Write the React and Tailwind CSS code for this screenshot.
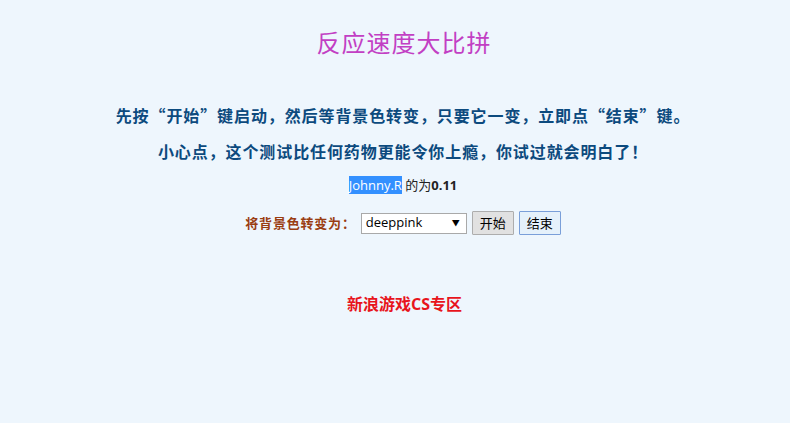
import { useState } from "react";

const cjk = { fontFamily: '"Noto Sans CJK SC", "Noto Sans", sans-serif' };
const ui = { fontFamily: '"Open Sans", "Noto Sans CJK SC", sans-serif' };

export default function App() {
  const [color, setColor] = useState("deeppink");

  return (
    <div className="min-h-[423px] w-full bg-[#eef6fd] flex flex-col items-center pl-[16px]" style={cjk}>
      {/* Title */}
      <h1 className="mt-[26px] text-[24px] leading-[32px] text-[#c23fc4] tracking-[1px] pl-[2px]">
        反应速度大比拼
      </h1>

      {/* Instructions */}
      <div className="mt-[39px] flex flex-col items-center font-bold text-[16px] text-[#0c4a7e] leading-[36px] tracking-[0.9px]">
        <p>先按“开始”键启动，然后等背景色转变，只要它一变，立即点“结束”键。</p>
        <p>小心点，这个测试比任何药物更能令你上瘾，你试过就会明白了！</p>
      </div>

      {/* Result */}
      <p className="mt-[6px] text-[13px] leading-[20px] text-[#222]" style={ui}>
        <span className="bg-[#3390ff] text-white">Johnny.R</span> 的为<b>0.11</b>
      </p>

      {/* Controls */}
      <div className="mt-[16px] flex items-center gap-[5px] text-[13px]" style={ui}>
        <span className="font-bold text-[#9a3d12] tracking-[0.8px]" style={cjk}>将背景色转变为：</span>
        <div className="relative w-[106px] h-[21px] border border-[#a9a9a9] bg-white flex items-center pl-[4px] text-black">
          <select
            value={color}
            onChange={(e) => setColor(e.target.value)}
            className="absolute inset-0 opacity-0"
          >
            <option>deeppink</option>
            <option>red</option>
            <option>yellow</option>
            <option>green</option>
          </select>
          <span className="flex-1">{color}</span>
          <span className="text-[8px] mr-[6px]">▼</span>
        </div>
        <button className="h-[24px] w-[42px] border border-[#adadad] bg-[#e1e1e1] text-[13px] text-black rounded-[1px]" style={cjk}>
          开始
        </button>
        <button className="h-[24px] w-[42px] border border-[#7a9fd9] bg-[#e5f1fb] text-[13px] text-black rounded-[1px]" style={cjk}>
          结束
        </button>
      </div>

      {/* Footer link */}
      <a href="#" className="mt-[57px] text-[16px] font-bold text-[#e8141c] pl-[3px]" style={ui}>
        新浪游戏CS专区
      </a>
    </div>
  );
}
